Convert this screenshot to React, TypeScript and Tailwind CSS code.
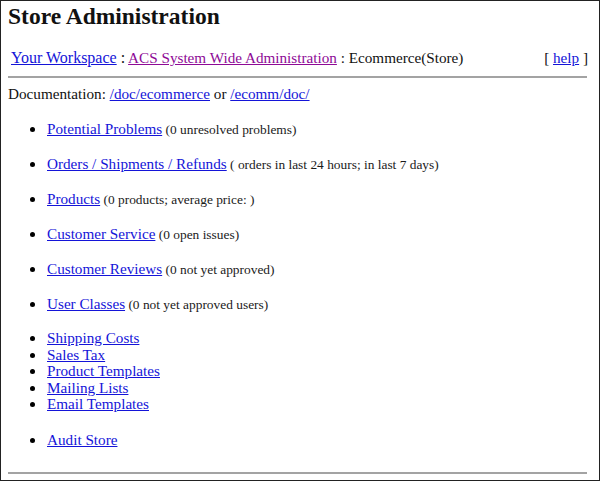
const serif = { fontFamily: '"Liberation Serif", "Times New Roman", serif' };

function Bullet() {
  return <span className="inline-block w-[5px] h-[5px] rounded-full bg-black ml-[22px] mr-[12px] mb-[2px]" />;
}

function A({ children, visited }: { children: React.ReactNode; visited?: boolean }) {
  return (
    <a href="#" className={visited ? "text-[#8e0a96] underline" : "text-[#1414d8] underline"}>
      {children}
    </a>
  );
}

function Item({ label, note }: { label: string; note?: string }) {
  return (
    <li className="h-[18px] leading-[18px]">
      <Bullet />
      <A>{label}</A>
      {note && <span className="text-[13.4px] leading-none text-[#1a1a1a]"> {note}</span>}
    </li>
  );
}

const main = [
  { label: "Potential Problems", note: "(0 unresolved problems)" },
  { label: "Orders / Shipments / Refunds", note: "( orders in last 24 hours; in last 7 days)" },
  { label: "Products", note: "(0 products; average price: )" },
  { label: "Customer Service", note: "(0 open issues)" },
  { label: "Customer Reviews", note: "(0 not yet approved)" },
  { label: "User Classes", note: "(0 not yet approved users)" },
];

const setup = ["Shipping Costs", "Sales Tax", "Product Templates", "Mailing Lists", "Email Templates"];

export default function App() {
  return (
    <div
      style={serif}
      className="w-[600px] h-[481px] border border-[#222] bg-white px-[7px] pt-[1px] text-[15.2px] text-[#111] overflow-hidden"
    >
      <h1 className="text-[23.5px] font-bold leading-[28px]">Store Administration</h1>

      <div className="mt-[19px] flex justify-between pl-[3px] pr-[4px] leading-[18px]">
        <div>
          <span className="text-[16px]">
            <A>Your Workspace</A> :
          </span>{" "}
          <A visited>ACS System Wide Administration</A> : Ecommerce(Store)
        </div>
        <div>
          [ <A>help</A> ]
        </div>
      </div>
      <div className="mt-[9px] mr-[5px] h-[2px] bg-[#a3a3a3]" />

      <div className="mt-[7px] leading-[18px]">
        Documentation: <A>/doc/ecommerce</A> or <A>/ecomm/doc/</A>
      </div>

      <ul className="mt-[17px] flex flex-col gap-[17px]">
        {main.map((m) => (
          <Item key={m.label} label={m.label} note={m.note} />
        ))}
      </ul>

      <ul className="mt-[17px]">
        {setup.map((s) => (
          <li key={s} className="leading-[16.6px]">
            <Bullet />
            <A>{s}</A>
          </li>
        ))}
      </ul>

      <ul className="mt-[18px]">
        <Item label="Audit Store" />
      </ul>

      <div className="mt-[23px] mr-[5px] h-[2px] bg-[#a3a3a3]" />
    </div>
  );
}
